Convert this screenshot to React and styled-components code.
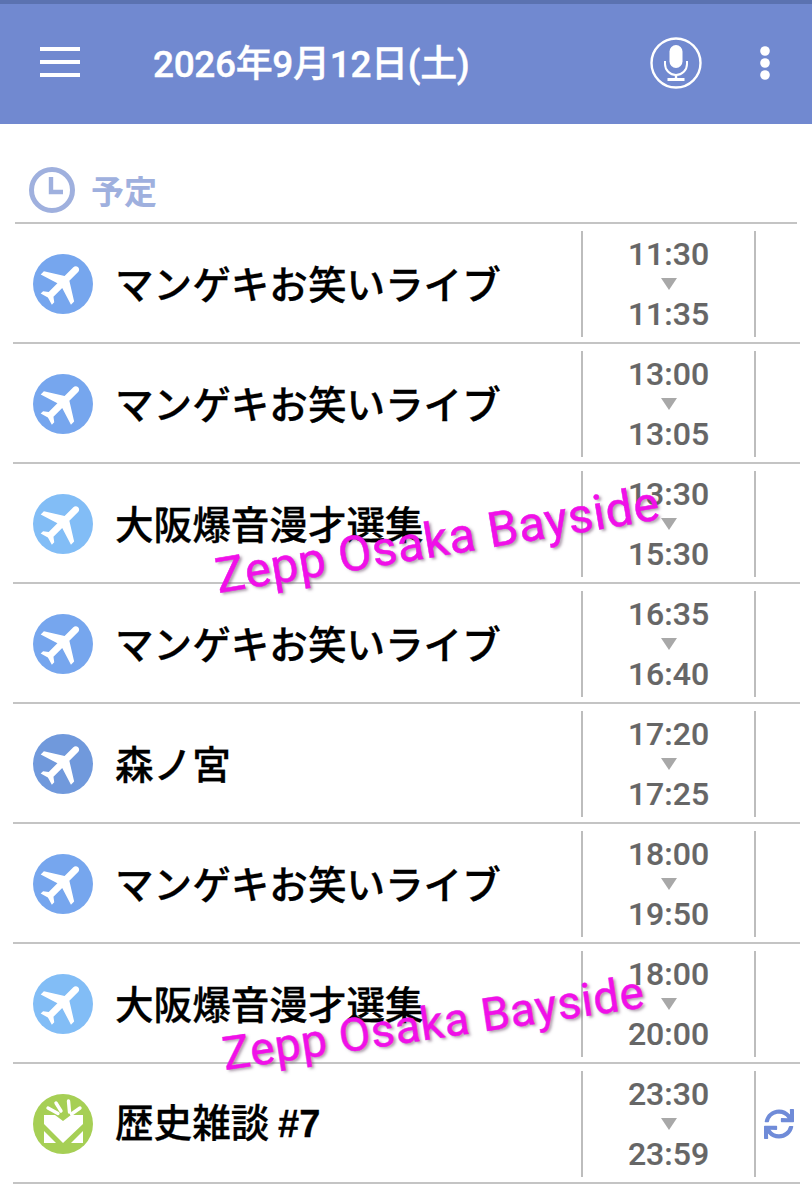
import React from "react";
import styled, { createGlobalStyle } from "styled-components";
import { FaSync } from "react-icons/fa";

const Global = createGlobalStyle`
  html, body { margin: 0; padding: 0; background: #fff; }
  body { font-family: Roboto, "Noto Sans CJK JP", sans-serif; }
`;

const Page = styled.div`
  width: 812px;
  height: 1200px;
  overflow: hidden;
  background: #fff;
`;

const Header = styled.header`
  box-sizing: border-box;
  border-top: 4px solid #5b72b0;
  height: 124px;
  background: #7189d0;
  display: flex;
  align-items: center;
  color: #fff;
`;

const Burger = styled.div`
  width: 40px;
  margin-left: 40px;
  display: flex;
  flex-direction: column;
  gap: 9px;
  margin-top: -4px;
  span { display: block; height: 4px; background: #fff; }
`;

const Title = styled.h1`
  margin: 2px 0 0 73px;
  flex: 1;
  font: 500 37px/40px Roboto, "Noto Sans CJK JP", sans-serif;
  letter-spacing: -0.35px;
  -webkit-text-stroke: 0.4px #fff;
`;

const IconSlot = styled.div`
  display: flex;
  margin-top: -2px;
  margin-right: ${(p) => p.$right}px;
`;

const Section = styled.div`
  height: 98px;
  box-sizing: border-box;
  padding: 43px 0 0 29px;
  display: flex;
  gap: 16px;
  align-items: flex-start;
`;

const SectionLabel = styled.span`
  font: 700 33px/46px "Noto Sans CJK JP", sans-serif;
  color: #9fb0de;
`;

const TopRule = styled.div`
  height: 2px;
  margin: 0 15px;
  background: #c4c4c4;
`;

const Row = styled.div`
  position: relative;
  height: 118px;
  display: flex;
  align-items: center;
  box-sizing: border-box;
  padding: 7px 0 5px 0;
`;

const RowRule = styled.div`
  height: 2px;
  margin: 0 12px 0 13px;
  background: #c4c4c4;
`;

const Badge = styled.div`
  width: 60px;
  height: 60px;
  margin-left: 33px;
  border-radius: 50%;
  background: ${(p) => p.$color};
  display: flex;
  align-items: center;
  justify-content: center;
  flex: none;
`;

const Name = styled.div`
  flex: 1;
  margin-left: 22px;
  font: 500 38.6px/48px "Noto Sans CJK JP", sans-serif;
  color: #000;
  white-space: nowrap;
  margin-top: -4px;
  -webkit-text-stroke: 0.3px #000;
`;

const Tag = styled.b`
  font: 700 38px/48px "Liberation Sans", sans-serif;
`;

const Times = styled.div`
  align-self: stretch;
  width: 175px;
  flex: none;
  box-sizing: border-box;
  border-left: 2px solid #bdbdbd;
  border-right: 2px solid #bdbdbd;
  display: flex;
  flex-direction: column;
  align-items: center;
  justify-content: space-between;
  font: 500 32px/38px Roboto, sans-serif;
  color: #666;
  padding: 4px 0;
  -webkit-text-stroke: 0.2px #666;
`;

const Arrow = styled.div`
  width: 0;
  height: 0;
  border-left: 8.5px solid transparent;
  border-right: 8.5px solid transparent;
  border-top: 12px solid #a8a8a8;
`;

const Sync = styled.div`
  width: 56px;
  flex: none;
  box-sizing: border-box;
  padding-right: 10px;
  display: flex;
  justify-content: center;
  color: #6f8bd8;
  font-size: 30px;
`;

const Stamp = styled.div`
  position: absolute;
  left: ${(p) => p.$left}px;
  top: ${(p) => p.$top}px;
  font: 400 ${(p) => p.$size}px/1 Roboto, sans-serif;
  color: #f010e8;
  white-space: nowrap;
  transform: rotate(${(p) => p.$angle}deg);
  transform-origin: left bottom;
  text-shadow: 2px 2px 3px rgba(90, 60, 90, 0.5);
  letter-spacing: 0.6px;
  -webkit-text-stroke: 0.5px #f010e8;
`;

const Plane = () => (
  <svg width="54" height="54" viewBox="0 0 24 24" fill="#fff" style={{ transform: "rotate(45deg)" }}>
    <path d="M21 16v-2l-8-5V3.5c0-.83-.67-1.5-1.5-1.5S10 2.67 10 3.5V9l-8 5v2l8-2.5V19l-2 1.5V22l3.5-1 3.5 1v-1.5L13 19v-5.5l8 2.5z" />
  </svg>
);

const Gift = () => (
  <svg width="60" height="60" viewBox="0 0 60 60" fill="#fff" stroke="none">
    <path d="M11 21 H22 L30 27 L38 21 H50 V30 L30 49 L11 30 Z" />
    <path d="M11 37 L23 49 H11 Z" />
    <path d="M50 37 L38 49 H50 Z" />
    <g stroke="#fff" strokeWidth="3.4" strokeLinecap="round">
      <path d="M15 14 L25 19.5" />
      <path d="M23 9 L28 17" />
      <path d="M35.5 7 L36.5 18" />
      <path d="M47 14 L38.5 20" />
    </g>
  </svg>
);

const MicIcon = () => (
  <svg width="52" height="52" viewBox="0 0 52 52" fill="none" stroke="#fff">
    <ellipse cx="26" cy="26" rx="24.5" ry="24.5" strokeWidth="2.4" />
    <rect x="19.5" y="8" width="13" height="23" rx="6.5" fill="#fff" stroke="none" />
    <path d="M15 24 v3 a11 11 0 0 0 22 0 v-3" strokeWidth="2" />
    <path d="M26 38 v4" strokeWidth="2.4" />
    <path d="M17.5 42.5 h17" strokeWidth="3" />
  </svg>
);

const Dots = () => (
  <svg width="12" height="34" viewBox="0 0 12 34" fill="#fff">
    <circle cx="6" cy="5" r="4.8" />
    <circle cx="6" cy="17" r="4.8" />
    <circle cx="6" cy="29" r="4.8" />
  </svg>
);

const Clock = () => (
  <svg width="46" height="46" viewBox="0 0 46 46" fill="none" stroke="#9fb0de">
    <ellipse cx="23" cy="23" rx="20.5" ry="20.5" strokeWidth="5" />
    <path d="M22 10 v15 h12" strokeWidth="4.4" />
  </svg>
);

const LIVE = "マンゲキお笑いライブ";
const ZEPP = "大阪爆音漫才選集";
const rows = [
  { name: LIVE, from: "11:30", to: "11:35", color: "#76a6ee" },
  { name: LIVE, from: "13:00", to: "13:05", color: "#76a6ee" },
  { name: ZEPP, from: "13:30", to: "15:30", color: "#82bdf6", stamp: { left: 220, top: 89, size: 48.6, angle: -9.5 } },
  { name: LIVE, from: "16:35", to: "16:40", color: "#76a6ee" },
  { name: "森ノ宮", from: "17:20", to: "17:25", color: "#7099dc" },
  { name: LIVE, from: "18:00", to: "19:50", color: "#76a6ee" },
  { name: ZEPP, from: "18:00", to: "20:00", color: "#82bdf6", stamp: { left: 226, top: 87, size: 46, angle: -8.5 } },
  { name: "歴史雑談", tag: "#7", from: "23:30", to: "23:59", color: "#a6cf55", gift: true, sync: true },
];

export default function App() {
  return (
    <Page>
      <Global />
      <Header>
        <Burger><span /><span /><span /></Burger>
        <Title>2026年9月12日(土)</Title>
        <IconSlot $right={57}><MicIcon /></IconSlot>
        <IconSlot $right={41}><Dots /></IconSlot>
      </Header>
      <Section>
        <Clock />
        <SectionLabel>予定</SectionLabel>
      </Section>
      <TopRule />
      {rows.map((r, i) => (
        <React.Fragment key={i}>
          <Row>
            <Badge $color={r.color}>{r.gift ? <Gift /> : <Plane />}</Badge>
            <Name>{r.name}{r.tag && <> <Tag>{r.tag}</Tag></>}</Name>
            <Times>
              <span>{r.from}</span>
              <Arrow />
              <span>{r.to}</span>
            </Times>
            <Sync>{r.sync && <FaSync />}</Sync>
            {r.stamp && (
              <Stamp $left={r.stamp.left} $top={r.stamp.top} $size={r.stamp.size} $angle={r.stamp.angle}>
                Zepp Osaka Bayside
              </Stamp>
            )}
          </Row>
          <RowRule />
        </React.Fragment>
      ))}
    </Page>
  );
}
